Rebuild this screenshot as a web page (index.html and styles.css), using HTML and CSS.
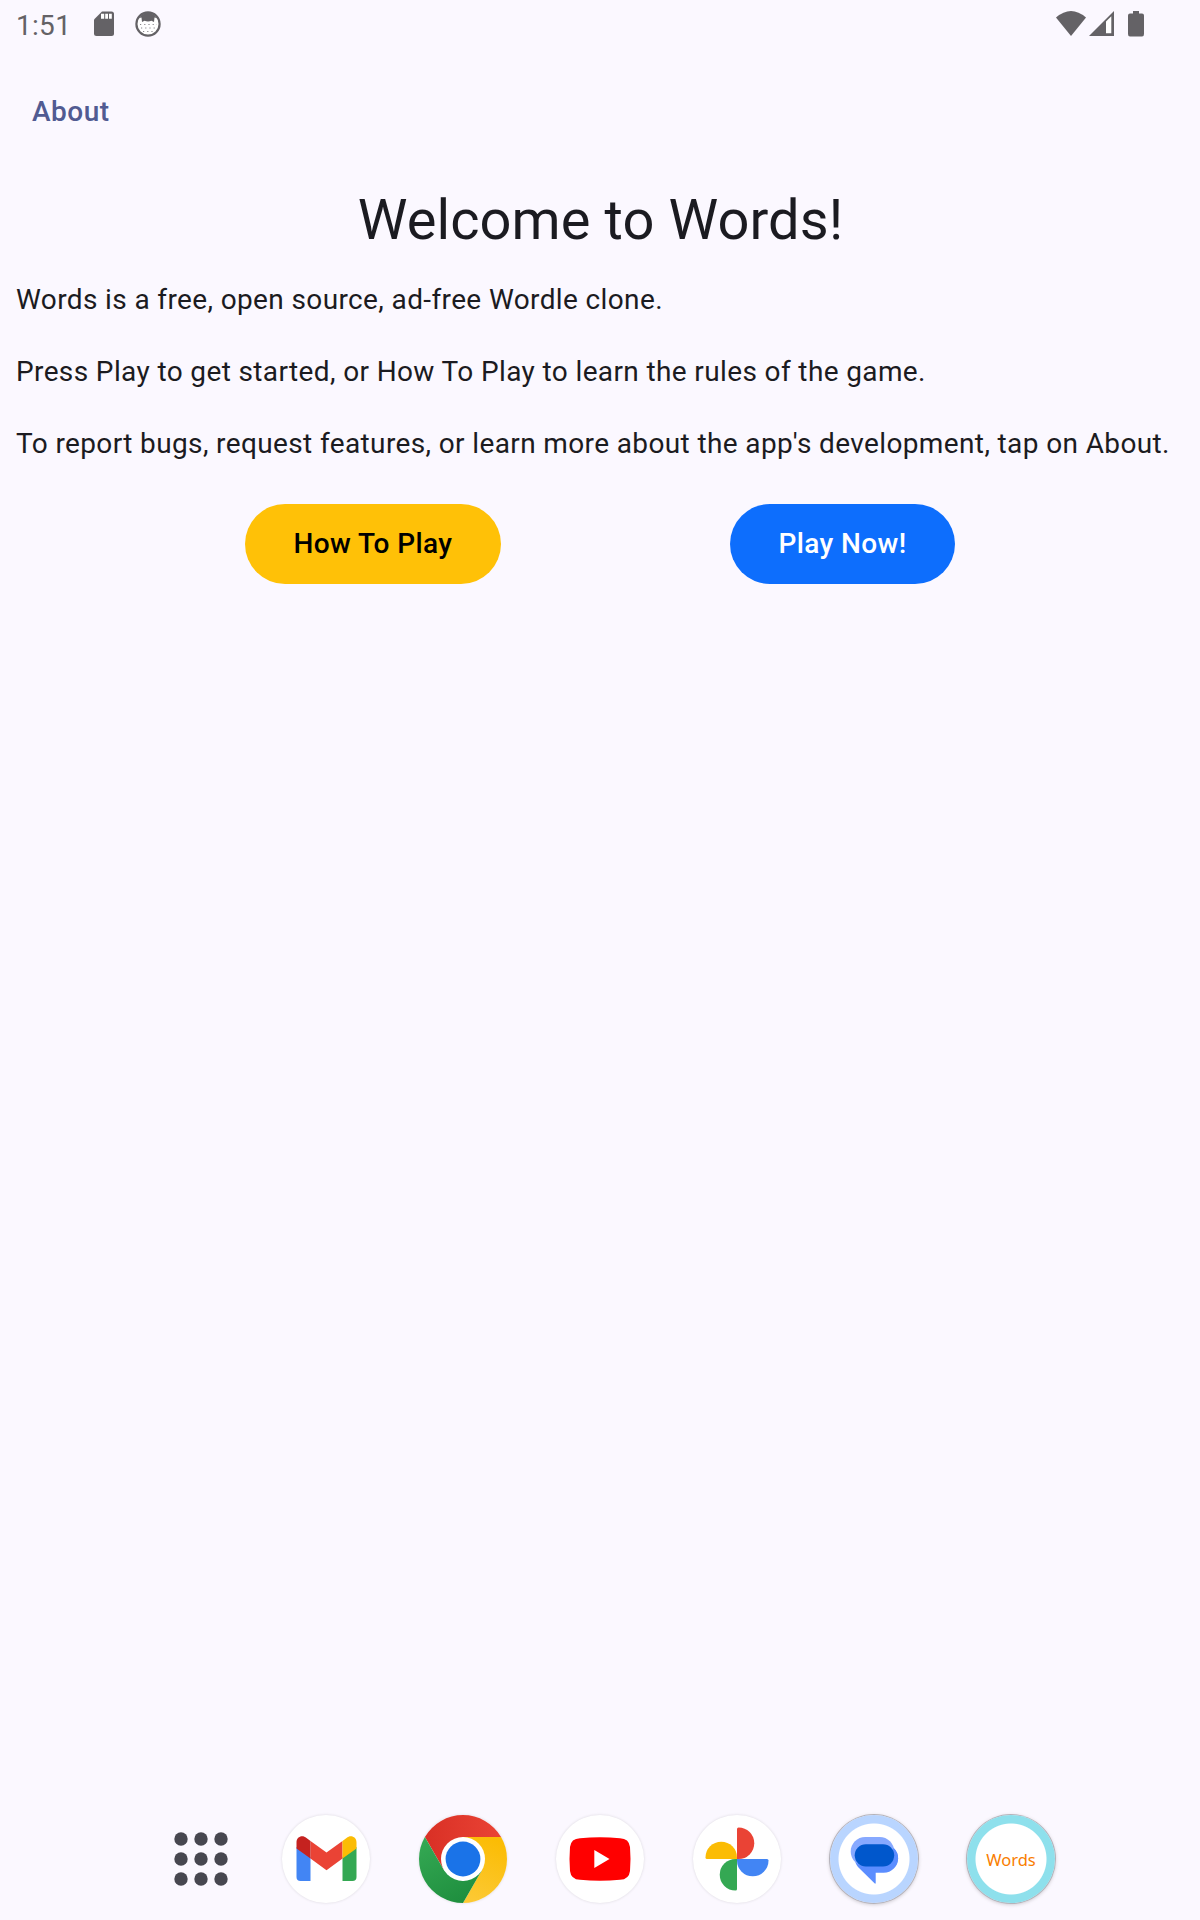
FILE: index.html
```html
<!DOCTYPE html>
<html lang="en">
<head>
<meta charset="utf-8">
<title>Words</title>
<link rel="stylesheet" href="styles.css">
</head>
<body>
<div class="screen">
  <header class="status">
    <span class="clock">1:51</span>
    <svg class="sd" width="20" height="26" viewBox="0 0 20 26"><path fill="#646266" d="M8 .5H17.500Q20 .5 20 3V22.500Q20 25 17.500 25H2.500Q0 25 0 22.500V8.500Z"/><path fill="#fff" d="M7 2.800H10.200V7.800H7ZM11.200 2.800H14V7.800H11.200ZM15 2.800H17.800V7.800H15Z"/></svg>
    <svg class="face" width="26" height="26" viewBox="0 0 26 26"><circle cx="13" cy="13" r="11.600" fill="#fff" stroke="#646266" stroke-width="2.200"/><path fill="#646266" d="M4 7Q13-4 22 7L19.500 6.500L19 11L16.500 9.800Q13 11 9.500 9.800L7 11L6.500 6.500Z"/><path stroke="#88868b" stroke-width="1.200" stroke-dasharray="1.200 3" fill="none" d="M5 13.500H22M6 17H21M8 20.500H19"/></svg>
    <span class="spacer"></span>
    <svg class="wifi" width="30" height="26" viewBox="0 0 30 26"><path fill="#646266" d="M0 6.500Q15-6.500 30 6.500L15 25Z"/></svg>
    <svg class="signal" width="25" height="26" viewBox="0 0 25 26"><path fill="#646266" d="M25 0V25H0Z"/><path fill="#fff" d="M17 10.500L22.300 5.300V22.300H17Z"/></svg>
    <svg class="battery" width="16" height="26" viewBox="0 0 16 26"><path fill="#646266" d="M5 0H11V2.500H14Q16 2.500 16 4.500V23Q16 25.500 14 25.500H2Q0 25.500 0 23V4.500Q0 2.500 2 2.500H5Z"/></svg>
  </header>
  <nav class="menu"><a class="about">About</a></nav>
  <main class="content">
    <h1 class="title">Welcome to Words!</h1>
    <p class="text">Words is a free, open source, ad-free Wordle clone.</p>
    <p class="text">Press Play to get started, or How To Play to learn the rules of the game.</p>
    <p class="text">To report bugs, request features, or learn more about the app's development, tap on About.</p>
    <div class="actions">
      <button class="btn help">How To Play</button>
      <button class="btn play">Play Now!</button>
    </div>
  </main>
  <footer class="dock">
    <svg class="apps" width="54" height="54" viewBox="0 0 54 54" fill="#474750"><circle cx="7" cy="7" r="6.700"/><circle cx="27" cy="7" r="6.700"/><circle cx="47" cy="7" r="6.700"/><circle cx="7" cy="27" r="6.700"/><circle cx="27" cy="27" r="6.700"/><circle cx="47" cy="27" r="6.700"/><circle cx="7" cy="47" r="6.700"/><circle cx="27" cy="47" r="6.700"/><circle cx="47" cy="47" r="6.700"/></svg>
    <div class="app"><svg width="88" height="88" viewBox="0 0 88 88"><path fill="#4285f4" d="M14.500 32L28.500 42V66H18.500Q14.500 66 14.500 62Z"/><path fill="#34a853" d="M74.500 32L60.500 42V66H70.500Q74.500 66 74.500 62Z"/><path fill="#ea4335" d="M28.500 26L44.500 37.500L60.500 26V43.500L44.500 55.300L28.500 43.500Z"/><path fill="#c5221f" d="M28.500 26V43.500L14.500 33.500V27.500C14.500 21.500 20.500 19.500 24.500 23Z"/><path fill="#fbbc04" d="M60.500 26V43.500L74.500 33.500V27.500C74.500 21.500 68.500 19.500 64.500 23Z"/></svg></div>
    <div class="app"><svg width="88" height="88" viewBox="0 0 88 88">
      <defs><linearGradient id="red"><stop stop-color="#d93025"/><stop offset="1" stop-color="#ea4335"/></linearGradient><linearGradient id="yellow" x1=".3" y1="1" x2=".6" y2="0"><stop stop-color="#fcc934"/><stop offset="1" stop-color="#fbbc04"/></linearGradient><linearGradient id="green" x1=".7" y1="1" x2=".2" y2="0"><stop stop-color="#1e8e3e"/><stop offset="1" stop-color="#34a853"/></linearGradient></defs>
      <path fill="url(#red)" d="M5.900 22A44 44 0 0 1 82.100 22H44L24.900 55Z"/><path fill="url(#yellow)" d="M82.100 22A44 44 0 0 1 44 88L63 55L44 22Z"/><path fill="url(#green)" d="M44 88A44 44 0 0 1 5.900 22L24.900 55L44 66L63 55Z"/><circle cx="44" cy="44" r="22" fill="#fff"/><circle cx="44" cy="44" r="17.400" fill="#1a73e8"/></svg></div>
    <div class="app"><svg width="88" height="88" viewBox="0 0 88 88"><path fill="red" d="M24 23.200Q44 21.500 64 23.200Q73 23.500 74 32Q75 44 74 56Q73 64.500 64 64.800Q44 66.500 24 64.800Q15 64.500 14 56Q13 44 14 32Q15 23.500 24 23.200Z"/><path fill="#fff" d="M38.300 35V53L53.500 44Z"/></svg></div>
    <div class="app"><svg width="88" height="88" viewBox="0 0 88 88"><path fill="#ea4335" d="M44 44V14Q44 12.500 45.500 12.500A15.700 15.700 0 0 1 45.500 44Z"/><path fill="#4285f4" d="M44 44H74Q75.500 44 75.500 45.500A15.700 15.700 0 0 1 44 45.500Z"/><path fill="#34a853" d="M44 44V74Q44 75.500 42.500 75.500A15.700 15.700 0 0 1 42.500 44Z"/><path fill="#fbbc04" d="M44 44H14Q12.500 44 12.500 42.500A15.700 15.700 0 0 1 44 42.500Z"/></svg></div>
    <div class="app ring messages"><svg width="88" height="88" viewBox="0 0 88 88"><path fill="#5b8dff" d="M53.700 29A14.400 14.400 0 0 1 53.700 57.800H45.700V68Q45.500 69.200 44.500 68.300L28 52Q24.700 48 24.700 42Z"/><rect x="20.700" y="22" width="43.500" height="29" rx="14.500" fill="#87a9ff"/><path fill="#5b8dff" d="M63.500 33Q68.100 37 68.100 43.400Q68 48 64.500 52H58Z"/><rect x="24.700" y="29.200" width="39.500" height="22.300" rx="11.150" fill="#0057cc"/></svg></div>
    <div class="app ring words"><span class="label">Words</span></div>
  </footer>
</div>
</body>
</html>
```
FILE: styles.css
```css
body { margin: 0; background: #fbf8ff; font-family: Roboto, sans-serif; color: #1b1b21; }
.screen { width: 1200px; height: 1920px; display: flex; flex-direction: column; overflow: hidden; }
.status { height: 48px; display: flex; align-items: center; padding: 0 56px 0 16px; box-sizing: border-box; color: #646266; }
.clock { font-size: 28px; line-height: 33px; margin-top: 3px; width: 78px; letter-spacing: .3px; }
.face { margin-left: 21px; }
.spacer { flex: 1; }
.signal { margin-left: 3px; }
.battery { margin-left: 14px; }
.menu { height: 126px; display: flex; align-items: center; padding: 0 32px; box-sizing: border-box; }
.about { font-size: 28px; font-weight: 500; letter-spacing: .5px; color: #515b92; }
.content { flex: 1; padding: 0 16px; }
.title { margin: 10px 0 26px; padding-left: 1px; font-size: 56px; line-height: 72px; font-weight: 400; text-align: center; letter-spacing: .1px; }
.text { margin: 0 0 36px; font-size: 28px; line-height: 36px; letter-spacing: .375px; white-space: nowrap; }
.actions { display: flex; justify-content: space-evenly; margin-top: 42px; }
.btn { height: 80px; border: 0; border-radius: 40px; padding: 0 48.500px 2px; font: 500 28px Roboto, sans-serif; letter-spacing: .4px; }
.help { background: #ffc107; color: #000; }
.play { background: #0d6efd; color: #fff; }
.dock { height: 121px; box-sizing: border-box; display: flex; align-items: center; gap: 49px; padding: 0 0 1px 174px; }
.apps { margin-right: 5px; }
.app { width: 88px; height: 88px; border-radius: 50%; background: #fff; box-shadow: 0 0 3px #0002; display: flex; align-items: center; justify-content: center; }
.app svg { display: block; }
.ring { box-shadow: 0 0 0 1px #b5b3ba, 0 1px 4px #0004; }
.messages { background: radial-gradient(circle, #fff 35px, #b9d5ff 36px); }
.words { background: radial-gradient(circle, #fff 35px, #8ee0ec 36px); }
.label { font: 16.500px "Noto Sans", sans-serif; color: #f97d00; }
```
